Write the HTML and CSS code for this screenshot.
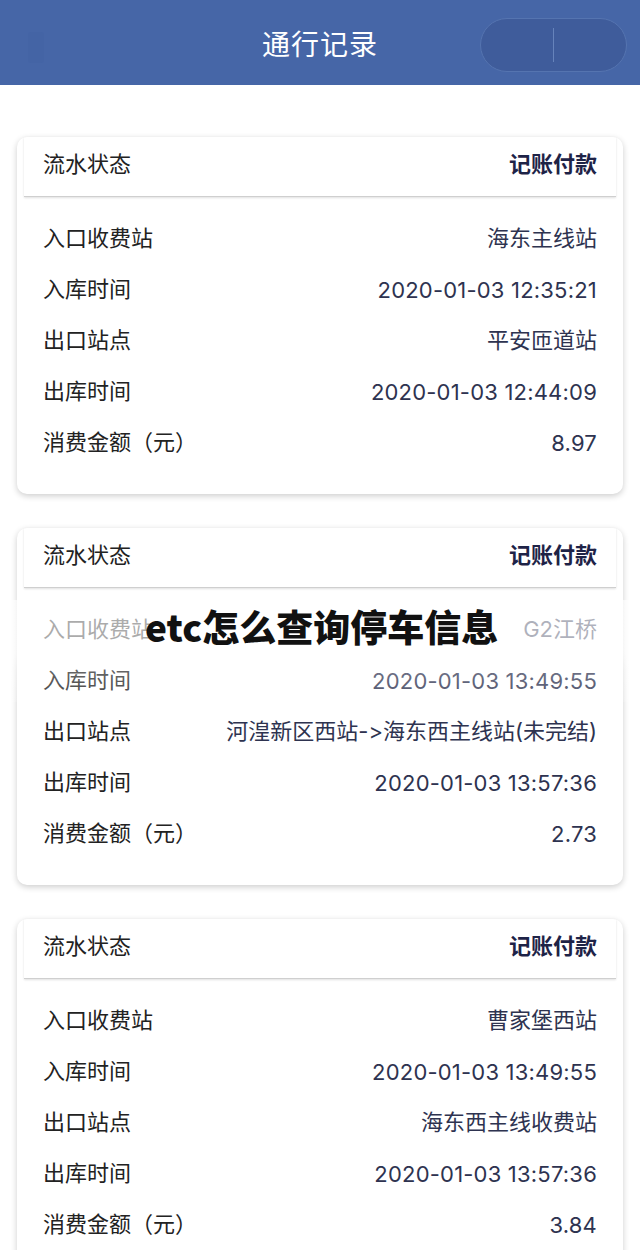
FILE: index.html
```html
<!DOCTYPE html>
<html lang="zh-CN">
<head>
<meta charset="utf-8">
<title>通行记录</title>
<link rel="stylesheet" href="styles.css">
</head>
<body>
<header class="topbar">
  <div class="back"></div>
  <h1 class="title">通行记录</h1>
  <div class="capsule"><span class="capsule-div"></span></div>
</header>
<main class="list">
  <section class="card">
    <div class="card-head"><span class="label">流水状态</span><span class="status">记账付款</span></div>
    <div class="card-body">
      <div class="row"><span class="label">入口收费站</span><span class="value">海东主线站</span></div>
      <div class="row"><span class="label">入库时间</span><span class="value num">2020-01-03 12:35:21</span></div>
      <div class="row"><span class="label">出口站点</span><span class="value">平安匝道站</span></div>
      <div class="row"><span class="label">出库时间</span><span class="value num">2020-01-03 12:44:09</span></div>
      <div class="row"><span class="label">消费金额（元）</span><span class="value num">8.97</span></div>
    </div>
  </section>
  <section class="card">
    <div class="card-head"><span class="label">流水状态</span><span class="status">记账付款</span></div>
    <div class="card-body">
      <div class="row"><span class="label">入口收费站</span><span class="value">G2江桥</span></div>
      <div class="row"><span class="label">入库时间</span><span class="value num">2020-01-03 13:49:55</span></div>
      <div class="row"><span class="label">出口站点</span><span class="value">河湟新区西站-&gt;海东西主线站(未完结)</span></div>
      <div class="row"><span class="label">出库时间</span><span class="value num">2020-01-03 13:57:36</span></div>
      <div class="row"><span class="label">消费金额（元）</span><span class="value num">2.73</span></div>
    </div>
  </section>
  <section class="card">
    <div class="card-head"><span class="label">流水状态</span><span class="status">记账付款</span></div>
    <div class="card-body">
      <div class="row"><span class="label">入口收费站</span><span class="value">曹家堡西站</span></div>
      <div class="row"><span class="label">入库时间</span><span class="value num">2020-01-03 13:49:55</span></div>
      <div class="row"><span class="label">出口站点</span><span class="value">海东西主线收费站</span></div>
      <div class="row"><span class="label">出库时间</span><span class="value num">2020-01-03 13:57:36</span></div>
      <div class="row"><span class="label">消费金额（元）</span><span class="value num">3.84</span></div>
    </div>
  </section>
</main>
<div class="band"></div>
<div class="watermark">etc怎么查询停车信息</div>
</body>
</html>
```
FILE: styles.css
```css
* { box-sizing: border-box; }
html, body { margin: 0; padding: 0; }
body {
  width: 640px;
  height: 1250px;
  overflow: hidden;
  position: relative;
  background: #ffffff;
  font-family: "Noto Sans CJK SC", "Noto Sans", sans-serif;
  color: #222222;
}
.topbar {
  height: 85px;
  background: #4666a7;
  display: flex;
  align-items: center;
  justify-content: center;
  position: relative;
}
.title {
  margin: 0;
  font-size: 28px;
  font-weight: 400;
  color: #ffffff;
  letter-spacing: 1px;
}
.back {
  position: absolute;
  left: 28px;
  top: 32px;
  width: 16px;
  height: 31px;
  background: #4464a5;
  border-radius: 3px;
}
.capsule {
  position: absolute;
  left: 480px;
  top: 18px;
  width: 147px;
  height: 54px;
  border-radius: 27px;
  background: #3f5c9b;
  border: 1px solid #5574b0;
  display: flex;
  align-items: center;
  justify-content: center;
}
.capsule-div {
  display: block;
  width: 1px;
  height: 34px;
  background: #6683bb;
}
.list {
  padding: 52px 17px 0;
  display: flex;
  flex-direction: column;
  gap: 34px;
}
.card {
  background: #ffffff;
  border-radius: 10px;
  box-shadow: 0 2px 6px rgba(0, 0, 0, 0.2);
  flex: none;
}
.card-head {
  height: 60px;
  margin: 0 7px;
  padding: 0 19px 10px;
  display: flex;
  align-items: center;
  justify-content: space-between;
  border-bottom: 1px solid #cfcfcf;
  box-shadow: 0 1px 2px rgba(0, 0, 0, 0.12);
}
.card-body {
  padding: 13px 26px 29px;
}
.row {
  height: 51px;
  display: flex;
  align-items: center;
  justify-content: space-between;
}
.label {
  font-size: 22px;
  color: #222222;
  white-space: nowrap;
}
.value {
  font-family: "Inter", "Noto Sans CJK SC", sans-serif;
  font-size: 22px;
  color: #2e3350;
  white-space: nowrap;
  font-variant-ligatures: none;
  font-feature-settings: "calt" 0, "liga" 0;
}
.value.num {
  padding-top: 6px;
  letter-spacing: 0.2px;
}
.status {
  font-size: 22px;
  font-weight: 700;
  color: #1e2347;
}
.band {
  position: absolute;
  left: 0;
  top: 600px;
  width: 640px;
  height: 102px;
  background: linear-gradient(to bottom, rgba(255,255,255,0.62) 0%, rgba(255,255,255,0.62) 52%, rgba(255,255,255,0.3) 70%, rgba(255,255,255,0.15) 100%);
}
.watermark {
  position: absolute;
  left: 145px;
  top: 600px;
  font-size: 37px;
  font-weight: 900;
  color: #111111;
  line-height: 52px;
  white-space: nowrap;
}
```
